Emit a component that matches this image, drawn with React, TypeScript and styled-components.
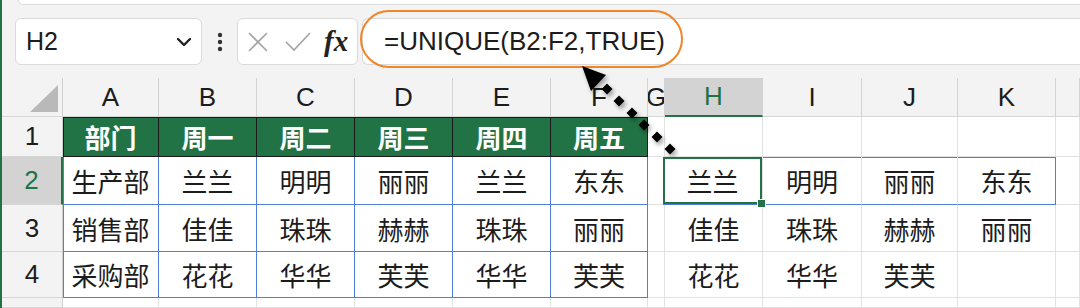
import React from 'react';
import styled, { createGlobalStyle, css } from 'styled-components';

const GREEN = '#217346';
const BLUE = '#4f7fd8';
const GRID = '#e1e1e1';
const INK = '#1c1c1c';

const GlobalStyle = createGlobalStyle`
  html, body { margin: 0; padding: 0; background: #fff; }
  body {
    font-family: "Liberation Sans", "Noto Sans CJK SC", sans-serif;
    overflow: hidden;
  }
`;

const Page = styled.div`
  position: relative;
  width: 1080px;
  height: 308px;
  box-sizing: border-box;
  overflow: hidden;
  border-left: 2px solid ${GREEN};
  background: #f3f3f3;
`;

const TopStrip = styled.div`
  height: 4px;
  margin-left: 16px;
  background: #fff;
  border-left: 1px solid #dcdcdc;
  border-bottom: 1px solid #dcdcdc;
  border-bottom-left-radius: 6px;
`;

const FormulaBar = styled.div`
  display: flex;
  align-items: center;
  height: 73px;
  box-sizing: border-box;
  padding: 13px 0 13px 13px;
`;

const NameBox = styled.div`
  display: flex;
  align-items: center;
  justify-content: space-between;
  width: 187px;
  height: 47px;
  box-sizing: border-box;
  padding: 0 9px 0 10px;
  background: #fff;
  border: 1px solid #dadada;
  border-radius: 6px;
  font-size: 25px;
  color: ${INK};
`;

const Grip = styled.div`
  display: flex;
  justify-content: center;
  width: 35px;
`;

const FnBox = styled.div`
  display: flex;
  align-items: center;
  gap: 15px;
  width: 121px;
  height: 47px;
  box-sizing: border-box;
  padding-left: 9px;
  background: #fff;
  border: 1px solid #dadada;
  border-radius: 6px;
`;

const FxText = styled.span`
  font-family: "Liberation Serif", "DejaVu Serif", serif;
  font-style: italic;
  font-weight: bold;
  font-size: 29px;
  color: #222;
  margin-left: -3px;
`;

const FormulaInput = styled.div`
  flex: 1;
  display: flex;
  align-items: center;
  height: 47px;
  box-sizing: border-box;
  margin-left: 4px;
  padding-left: 21px;
  background: #fff;
  border: 1px solid #dadada;
  border-right: none;
  border-radius: 6px 0 0 6px;
  font-size: 26px;
  color: ${INK};
`;

const Sheet = styled.div`
  display: grid;
  grid-template-columns: 61px 96px 98px 98px 98px 98px 97px 17px 98px 99px 96px 98px 1fr;
  grid-template-rows: 39px 40px 48px 47px 46px 1fr;
  height: 230px;
  background: #fff;
`;

const Corner = styled.div`
  position: relative;
  background: #f3f3f3;
  border-right: 1px solid #cfcfcf;
  border-bottom: 1px solid #d6d6d6;
`;

const ColHead = styled.div<{ $sel?: boolean }>`
  display: flex;
  align-items: center;
  justify-content: center;
  overflow: hidden;
  box-sizing: border-box;
  background: ${(p) => (p.$sel ? '#d3d3d3' : '#f3f3f3')};
  border-right: 1px solid #d2d2d2;
  border-bottom: ${(p) => (p.$sel ? `2px solid ${GREEN}` : '1px solid #d6d6d6')};
  color: ${(p) => (p.$sel ? GREEN : INK)};
  font-size: 26px;
`;

const RowHead = styled.div<{ $sel?: boolean }>`
  display: flex;
  align-items: center;
  justify-content: center;
  box-sizing: border-box;
  background: ${(p) => (p.$sel ? '#d3d3d3' : '#f3f3f3')};
  border-right: ${(p) => (p.$sel ? `2px solid ${GREEN}` : '1px solid #cfcfcf')};
  border-bottom: 1px solid #d6d6d6;
  color: ${(p) => (p.$sel ? GREEN : INK)};
  font-size: 26px;
`;

type Kind = 'plain' | 'title' | 'table' | 'spill';

const kinds = {
  plain: css`
    border-right: 1px solid ${GRID};
    border-bottom: 1px solid ${GRID};
  `,
  title: css<{ $left?: boolean }>`
    background: ${GREEN};
    color: #fff;
    font-weight: bold;
    border-right: 1px solid #1a1a1a;
    border-bottom: 1px solid #1a1a1a;
    box-shadow: inset 0 1px 0 #1a1a1a ${(p) => (p.$left ? ', inset 1px 0 0 #1a1a1a' : '')};
  `,
  table: css<{ $left?: boolean }>`
    border-right: 1px solid ${BLUE};
    border-bottom: 1px solid ${BLUE};
    box-shadow: ${(p) => (p.$left ? `inset 1px 0 0 ${BLUE}` : 'none')};
  `,
  spill: css<{ $left?: boolean; $right?: boolean }>`
    border-right: 1px solid ${(p) => (p.$right ? BLUE : GRID)};
    border-bottom: 1px solid ${BLUE};
    box-shadow: inset 0 1px 0 ${BLUE} ${(p) => (p.$left ? `, inset 1px 0 0 ${BLUE}` : '')};
  `,
};

const Cell = styled.div<{ $kind: Kind; $left?: boolean; $right?: boolean; $active?: boolean }>`
  position: relative;
  display: flex;
  align-items: center;
  justify-content: center;
  box-sizing: border-box;
  background: #fff;
  color: ${INK};
  font-family: "Noto Sans CJK SC", sans-serif;
  font-size: 26px;
  ${(p) => kinds[p.$kind]}
  ${(p) =>
    p.$active &&
    css`
      z-index: 2;
      margin-left: -2px;
      box-shadow: inset 0 0 0 2px ${GREEN};
      &::after {
        content: '';
        position: absolute;
        right: -4px;
        bottom: -4px;
        width: 7px;
        height: 7px;
        background: ${GREEN};
        border: 1px solid #fff;
      }
    `}
`;

const Callout = styled.div`
  position: absolute;
  left: 358px;
  top: 10px;
  width: 323px;
  height: 58px;
  box-sizing: border-box;
  border: 2.5px solid #f0852a;
  border-radius: 30px;
  pointer-events: none;
`;

const ArrowLayer = styled.svg`
  position: absolute;
  left: -2px;
  top: 0;
  pointer-events: none;
  filter: drop-shadow(2px 3px 2px rgba(0, 0, 0, 0.35));
`;

const COLS = ['A', 'B', 'C', 'D', 'E', 'F', 'G', 'H', 'I', 'J', 'K', 'L'];

const source = [
  ['部门', '周一', '周二', '周三', '周四', '周五'],
  ['生产部', '兰兰', '明明', '丽丽', '兰兰', '东东'],
  ['销售部', '佳佳', '珠珠', '赫赫', '珠珠', '丽丽'],
  ['采购部', '花花', '华华', '芙芙', '华华', '芙芙'],
];

const unique = [
  ['兰兰', '明明', '丽丽', '东东'],
  ['佳佳', '珠珠', '赫赫', '丽丽'],
  ['花花', '华华', '芙芙', ''],
];

const diamonds = [
  [607, 89],
  [619, 101],
  [632, 113],
  [644, 125],
  [657, 137],
  [670, 149],
];

function renderCell(r: number, c: number) {
  const key = `${r}-${c}`;
  if (r <= 3 && c <= 5) {
    return (
      <Cell key={key} $kind={r === 0 ? 'title' : 'table'} $left={c === 0}>
        {source[r][c]}
      </Cell>
    );
  }
  if (r === 1 && c >= 7 && c <= 10) {
    return (
      <Cell key={key} $kind="spill" $left={c === 7} $right={c === 10} $active={c === 7}>
        {unique[0][c - 7]}
      </Cell>
    );
  }
  const text = r >= 2 && r <= 3 && c >= 7 && c <= 10 ? unique[r - 1][c - 7] : '';
  return (
    <Cell key={key} $kind="plain">
      {text}
    </Cell>
  );
}

export default function App() {
  return (
    <>
      <GlobalStyle />
      <Page>
        <TopStrip />
        <FormulaBar>
          <NameBox>
            <span>H2</span>
            <svg width="16" height="10" viewBox="0 0 16 10">
              <path d="M2 2l6 6 6-6" fill="none" stroke="#222" strokeWidth="2.4" strokeLinecap="round" strokeLinejoin="round" />
            </svg>
          </NameBox>
          <Grip>
            <svg width="6" height="20" viewBox="0 0 6 20">
              <circle cx="3" cy="3" r="2.2" fill="#333" />
              <circle cx="3" cy="10" r="2.2" fill="#333" />
              <circle cx="3" cy="17" r="2.2" fill="#333" />
            </svg>
          </Grip>
          <FnBox>
            <svg width="22" height="20" viewBox="0 0 22 20">
              <path d="M2 1l18 18M20 1L2 19" stroke="#a3a3a3" strokeWidth="1.6" fill="none" />
            </svg>
            <svg width="28" height="20" viewBox="0 0 28 20">
              <path d="M2 10l8 8L26 1" stroke="#a3a3a3" strokeWidth="1.6" fill="none" />
            </svg>
            <FxText>fx</FxText>
          </FnBox>
          <FormulaInput>=UNIQUE(B2:F2,TRUE)</FormulaInput>
        </FormulaBar>
        <Sheet>
          <Corner>
            <svg width="60" height="38" viewBox="0 0 60 38" style={{ position: 'absolute', left: 0, top: 0 }}>
              <polygon points="28,34 56,34 56,7" fill="#b9b9b9" />
            </svg>
          </Corner>
          {COLS.map((c) => (
            <ColHead key={c} $sel={c === 'H'}>
              {c === 'L' ? '' : c}
            </ColHead>
          ))}
          {[0, 1, 2, 3, 4].map((r) => (
            <React.Fragment key={r}>
              <RowHead $sel={r === 1}>{r < 4 ? r + 1 : ''}</RowHead>
              {COLS.map((_, c) => renderCell(r, c))}
            </React.Fragment>
          ))}
        </Sheet>
        <Callout />
        <ArrowLayer width="1080" height="308" viewBox="0 0 1080 308">
          <polygon points="582,66 606,75 591,91" fill="#000" />
          {diamonds.map(([x, y]) => (
            <polygon key={x} points={`${x},${y - 5.5} ${x + 5.5},${y} ${x},${y + 5.5} ${x - 5.5},${y}`} fill="#000" />
          ))}
        </ArrowLayer>
      </Page>
    </>
  );
}
